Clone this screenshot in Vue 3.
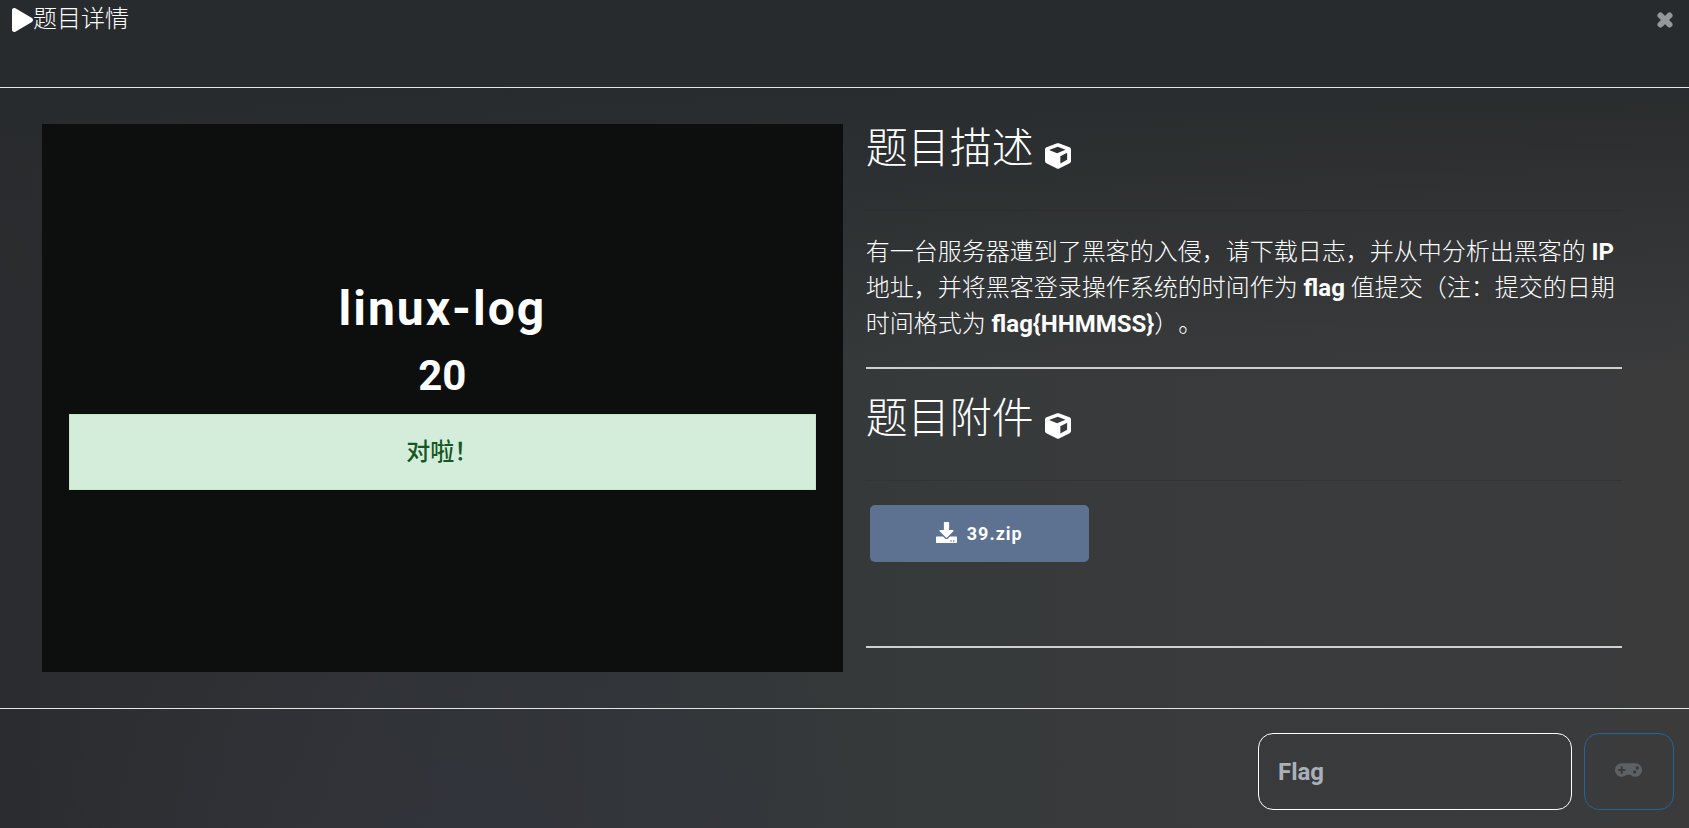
<template>
  <main class="dialog">
    <header class="top">
      <h1 class="title">
        <svg class="play" viewBox="0 0 448 512" aria-hidden="true"><path :d="icons.play" /></svg>
        题目详情
      </h1>
      <button class="close" type="button" aria-label="关闭">
        <svg viewBox="0 0 18 18" aria-hidden="true"><path :d="icons.times" /></svg>
      </button>
    </header>

    <div class="content">
      <section class="card">
        <h2 class="name">{{ challenge.name }}</h2>
        <p class="score">{{ challenge.score }}</p>
        <p class="alert" role="alert">对啦！</p>
      </section>

      <div class="info">
        <section class="block">
          <h2 class="heading">
            题目描述
            <svg class="cube" viewBox="0 0 512 512" aria-hidden="true"><path :d="icons.cube" /></svg>
          </h2>
          <p class="desc">有一台服务器遭到了黑客的入侵，请下载日志，并从中分析出黑客的 <b>IP</b> 地址，并将黑客登录操作系统的时间作为 <b>flag</b> 值提交（注：提交的日期时间格式为 <b>flag{HHMMSS}</b>）。</p>
        </section>

        <section class="block">
          <h2 class="heading">
            题目附件
            <svg class="cube" viewBox="0 0 512 512" aria-hidden="true"><path :d="icons.cube" /></svg>
          </h2>
          <div class="files">
            <a v-for="file in challenge.files" :key="file" class="file" href="#">
              <svg viewBox="0 0 512 512" aria-hidden="true"><path :d="icons.download" /></svg>
              {{ file }}
            </a>
          </div>
        </section>
      </div>
    </div>

    <form class="bottom" @submit.prevent="submit">
      <input v-model.trim="flag" class="flag" type="text" placeholder="Flag" aria-label="Flag" />
      <button class="send" type="submit" aria-label="提交">
        <svg viewBox="0 0 640 512" aria-hidden="true"><path :d="icons.gamepad" /></svg>
      </button>
    </form>
  </main>
</template>

<script setup>
import { ref } from "vue";

const emit = defineEmits(["submit"]);

const challenge = {
  name: "linux-log",
  score: 20,
  files: ["39.zip"],
};

const flag = ref("");

const icons = {
  play: "M424.4 214.7L72.4 6.6C43.8-10.3 0 6.1 0 47.9V464c0 37.5 40.7 60.1 72.4 41.3l352-208c31.4-18.5 31.5-64.1 0-82.6z",
  times: "M4.5 4.5l9 9M13.5 4.5l-9 9",
  cube: "M239.1 6.3l-208 78c-18.7 7-31.1 25-31.1 45v225.1c0 18.2 10.3 34.8 26.5 42.9l208 104c13.5 6.8 29.4 6.8 42.9 0l208-104c16.3-8.1 26.5-24.8 26.5-42.9V129.1c0-20-12.4-37.9-31.1-44.9l-208-78C262 2.2 250 2.2 239.1 6.3zM252 76l152 58-166 68-158-62zM302 404V260l134-66v138z",
  download: "M216 0h80c13.3 0 24 10.7 24 24v168h87.7c17.8 0 26.7 21.5 14.1 34.1L269.7 378.3c-7.5 7.5-19.8 7.5-27.3 0L90.1 226.1c-12.6-12.6-3.7-34.1 14.1-34.1H192V24c0-13.3 10.7-24 24-24zm296 376v112c0 13.3-10.7 24-24 24H24c-13.3 0-24-10.7-24-24V376c0-13.3 10.7-24 24-24h146.7l49 49c20.1 20.1 52.5 20.1 72.6 0l49-49H488c13.3 0 24 10.7 24 24zm-124 88c0-11-9-20-20-20s-20 9-20 20 9 20 20 20 20-9 20-20zm64 0c0-11-9-20-20-20s-20 9-20 20 9 20 20 20 20-9 20-20z",
  gamepad: "M480.07 96H160a160 160 0 1 0 114.24 272h91.5A160 160 0 1 0 480.07 96zM248 268a12 12 0 0 1-12 12h-52v52a12 12 0 0 1-12 12h-24a12 12 0 0 1-12-12v-52H84a12 12 0 0 1-12-12v-24a12 12 0 0 1 12-12h52v-52a12 12 0 0 1 12-12h24a12 12 0 0 1 12 12v52h52a12 12 0 0 1 12 12zm216 76a40 40 0 1 1 40-40 40 40 0 0 1-40 40zm64-96a40 40 0 1 1 40-40 40 40 0 0 1-40 40z",
};

function submit() {
  emit("submit", flag.value);
}
</script>

<style>
body { margin: 0; background: #2b2d30; }
</style>

<style scoped>
.dialog {
  min-height: 100vh; box-sizing: border-box; display: flex; flex-direction: column;
  color: #fff; font-family: Roboto, "Noto Sans CJK SC", sans-serif; font-size: 24px; font-weight: 300;
  text-spacing-trim: space-all;
  background:
    radial-gradient(ellipse at 28% 105%, #33353f99 0, transparent 25%),
    linear-gradient(#282b2d 8%, transparent 45%),
    linear-gradient(90deg, #2b2c2f, #303336 28%, #373a3b 55%, #3b3b3c);
}
h1, h2, p { margin: 0; font-weight: inherit; }
svg { display: block; fill: currentColor; }

.top { display: flex; justify-content: space-between; align-items: flex-start; height: 87px; border-bottom: 1px solid #e4e6e6; padding: 0 15px 0 12px; }
.title { display: flex; align-items: center; font-size: 24px; line-height: 39px; }
.play { width: 21px; height: 24px; }
.close { display: flex; padding: 11px 0; border: 0; background: none; color: #959798; cursor: pointer; }
.close svg { width: 18px; height: 18px; stroke: currentColor; stroke-width: 6; stroke-linecap: round; }

.content { flex: 1; display: grid; grid-template-columns: 18fr 17fr; gap: 23px; padding: 36px 67px 36px 42px; }
.card { display: flex; flex-direction: column; justify-content: center; padding: 0 27px; background: #0d0e0e; text-align: center; }
.name { padding-top: 4px; font-size: 48px; line-height: 70px; font-weight: 700; letter-spacing: 2px; }
.score { font-size: 42px; line-height: 64px; font-weight: 700; }
.alert { margin: 6px 0 36px; border: 1px solid #c3e6cb; background: #d4edda; color: #155724; line-height: 74px; font-weight: 500; }

.block { border-bottom: 2px solid #cfd0d0; }
.heading { display: flex; align-items: center; gap: 11px; height: 87px; box-sizing: border-box; padding-bottom: 37px; border-bottom: 1px solid #2b2d2e; font-size: 42px; line-height: 48px; }
.cube { width: 26px; height: 26px; margin-top: 14px; }
.desc { padding: 23px 0 25px; line-height: 36px; }
.desc b { font-weight: 700; }
.block + .block { padding-top: 25px; }
.block + .block .heading { border-color: #323435; }
.files { padding: 24px 4px 84px; display: flex; }
.file { display: flex; align-items: center; justify-content: center; gap: 10px; width: 219px; height: 57px; border-radius: 5px; background: #5d7290; color: #fff; font-size: 18px; font-weight: 700; letter-spacing: 1px; text-decoration: none; }
.file svg { width: 21px; height: 21px; margin-bottom: 3px; }

.bottom { display: flex; justify-content: flex-end; gap: 12px; padding: 24px 15px 18px; border-top: 1px solid #e4e6e6; }
.flag, .send { box-sizing: border-box; height: 77px; border: 1px solid #fff; border-radius: 15px; background: transparent; color: #fff; font: inherit; }
.flag { width: 314px; padding: 0 19px; font-weight: 700; }
.flag::placeholder { color: #a9b0b9; opacity: 1; }
.send { display: flex; align-items: center; justify-content: center; width: 90px; padding: 0 2px 3px 0; border-color: #22649b; color: #5d6163; cursor: pointer; }
.send svg { width: 27px; height: 22px; }
</style>
